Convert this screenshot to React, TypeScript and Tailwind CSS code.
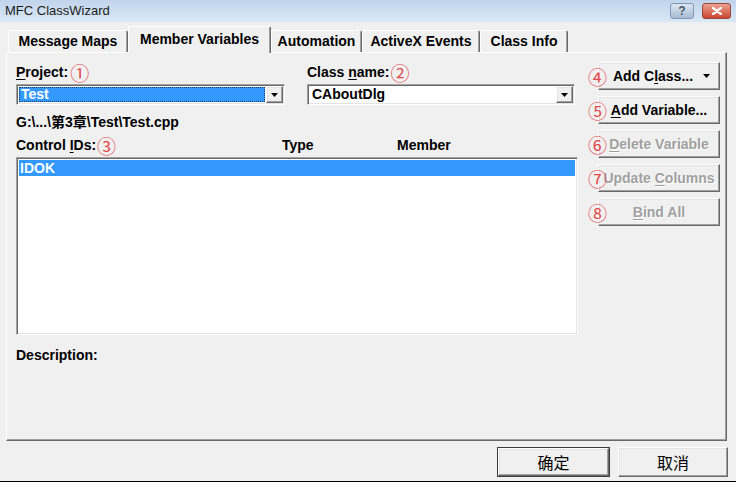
import React from 'react';

const raised =
  'bg-[#f0f0f0] border border-t-white border-l-white border-r-[#696969] border-b-[#696969] shadow-[inset_-1px_-1px_0_#a0a0a0,inset_1px_1px_0_#e3e3e3]';
const sunken =
  'border border-t-[#a0a0a0] border-l-[#a0a0a0] border-r-white border-b-white shadow-[inset_1px_1px_0_#696969,inset_-1px_-1px_0_#e3e3e3]';

function U({ children }: { children: React.ReactNode }) {
  return <span className="underline underline-offset-[2px] decoration-1">{children}</span>;
}

function Mark({ n, className = '' }: { n: string; className?: string }) {
  return (
    <span
      className={`font-['Noto_Sans_CJK_SC',sans-serif] font-normal text-[19px] leading-none text-[#e2474a] ${className}`}
    >
      {n}
    </span>
  );
}

function Arrow() {
  return (
    <svg width="7" height="4" viewBox="0 0 7 4">
      <path d="M0 0h7L3.5 4z" fill="#000" />
    </svg>
  );
}

function Combo({ value, selected, width }: { value: string; selected?: boolean; width: string }) {
  return (
    <div className={`${sunken} ${width} h-[21px] flex bg-white p-[1px]`}>
      <div className="flex-1 flex items-center p-[1px]">
        <div
          className={`h-full w-full flex items-center px-[2px] ${
            selected ? 'bg-[#3399ff] text-white outline-1 outline-dotted outline-[#1a3a6a] -outline-offset-1' : 'text-black'
          }`}
        >
          {value}
        </div>
      </div>
      <div className={`${raised} w-[17px] h-[17px] flex items-center justify-center`}>
        <Arrow />
      </div>
    </div>
  );
}

function SideButton({
  mark,
  children,
  disabled,
  dropdown,
}: {
  mark: string;
  children: React.ReactNode;
  disabled?: boolean;
  dropdown?: boolean;
}) {
  return (
    <div className="relative">
      <div
        className={`${raised} h-[28px] w-[122px] flex items-center justify-center ${
          disabled ? 'text-[#a0a0a0] [text-shadow:1px_1px_0_#ffffff]' : 'text-black'
        }`}
      >
        <span className={dropdown ? 'pl-[2px] mr-[14px]' : ''}>{children}</span>
        {dropdown && (
          <span className="absolute right-[10px] top-[12px]">
            <Arrow />
          </span>
        )}
      </div>
      <Mark n={mark} className="absolute -left-[10px] top-[5px]" />
    </div>
  );
}

const tabs = [
  { label: 'Message Maps', w: 'w-[120px]' },
  { label: 'Member Variables', w: 'w-[143px]', active: true },
  { label: 'Automation', w: 'w-[91px]' },
  { label: 'ActiveX Events', w: 'w-[118px]' },
  { label: 'Class Info', w: 'w-[88px]' },
];

export default function App() {
  return (
    <div className="w-[736px] h-[482px] bg-[#f0f0f0] border-b border-black flex flex-col font-['Liberation_Sans','Noto_Sans_CJK_SC',sans-serif] text-[14px] font-bold text-black select-none">
      {/* title bar */}
      <div className="h-[22px] flex items-center bg-gradient-to-b from-[#c0d4ec] to-[#dbe8f5] pl-[5px] pr-[5px]">
        <span className="flex-1 font-normal text-[13px] text-[#1b1b1b]">MFC ClassWizard</span>
        <div className="flex gap-[8px] items-center">
          <div className="w-[24px] h-[16px] rounded-[3px] border border-[#8298b6] bg-gradient-to-b from-[#dce6f2] to-[#a9bcd5] flex items-center justify-center text-[12px] leading-none font-bold text-[#3f4f66] [text-shadow:0_0_1px_#ffffff]">
            ?
          </div>
          <div className="w-[29px] h-[16px] rounded-[3px] border border-[#9b4638] bg-gradient-to-b from-[#eba293] to-[#c8432f] flex items-center justify-center">
            <svg width="10" height="8" viewBox="0 0 10 8">
              <path d="M1 1l8 6M9 1L1 7" stroke="#ffffff" strokeWidth="2.2" strokeLinecap="round" />
            </svg>
          </div>
        </div>
      </div>

      {/* tabs */}
      <div className="h-[30px] flex items-end pl-[8px]">
        {tabs.map((t) =>
          t.active ? (
            <div
              key={t.label}
              className={`${t.w} h-[27px] -mb-[1px] relative z-10 bg-[#f0f0f0] border-l border-t border-r border-l-white border-t-white border-r-[#696969] rounded-t-[2px] shadow-[inset_-1px_0_0_#a0a0a0] flex items-center justify-center pb-[2px]`}
            >
              {t.label}
            </div>
          ) : (
            <div
              key={t.label}
              className={`${t.w} h-[22px] border-l border-t border-r border-l-white border-t-white border-r-[#696969] rounded-t-[2px] shadow-[inset_-1px_0_0_#a0a0a0] flex items-center justify-center`}
            >
              {t.label}
            </div>
          )
        )}
      </div>

      {/* tab panel */}
      <div className="ml-[6px] w-[721px] h-[389px] border border-t-white border-l-white border-r-[#696969] border-b-[#696969] shadow-[inset_-1px_-1px_0_#a0a0a0] flex pl-[9px] pt-[9px] gap-[20px]">
        <div className="w-[562px] flex flex-col">
          <div className="flex">
            <div className="w-[291px] flex flex-col">
              <div className="h-[20px] flex items-center gap-[2px]">
                <span>
                  <U>P</U>roject:
                </span>
                <Mark n="①" />
              </div>
              <div className="mt-[2px]">
                <Combo value="Test" selected width="w-[269px]" />
              </div>
            </div>
            <div className="flex flex-col">
              <div className="h-[20px] flex items-center gap-[1px]">
                <span>
                  Class <U>n</U>ame:
                </span>
                <Mark n="②" />
              </div>
              <div className="mt-[2px]">
                <Combo value="CAboutDlg" width="w-[268px]" />
              </div>
            </div>
          </div>

          <div className="mt-[9px] h-[16px] leading-[16px]">G:\...\第3章\Test\Test.cpp</div>

          <div className="mt-[5px] h-[20px] flex items-center">
            <div className="w-[266px] flex items-center gap-[1px]">
              <span>
                Control <U>I</U>Ds:
              </span>
              <Mark n="③" />
            </div>
            <div className="w-[115px]">Type</div>
            <div>Member</div>
          </div>

          <div className={`${sunken} mt-[2px] h-[178px] bg-white p-[2px]`}>
            <div className="h-[16px] bg-[#3399ff] text-white flex items-center px-[1px]">IDOK</div>
          </div>

          <div className="mt-[12px] h-[16px] leading-[16px]">Description:</div>
        </div>

        <div className="flex flex-col gap-[6px]">
          <SideButton mark="④" dropdown>
            Add C<U>l</U>ass...
          </SideButton>
          <SideButton mark="⑤">
            <U>A</U>dd Variable...
          </SideButton>
          <SideButton mark="⑥" disabled>
            <U>D</U>elete Variable
          </SideButton>
          <SideButton mark="⑦" disabled>
            Update <U>C</U>olumns
          </SideButton>
          <SideButton mark="⑧" disabled>
            <U>B</U>ind All
          </SideButton>
        </div>
      </div>

      {/* dialog buttons */}
      <div className="mt-[6px] flex justify-end gap-[8px] pr-[8px] font-normal text-[16px] font-['Noto_Sans_CJK_SC',sans-serif]">
        <div className="w-[113px] h-[30px] border border-[#3c3c3c] flex">
          <div className={`${raised} flex-1 flex items-center justify-center`}>确定</div>
        </div>
        <div className={`${raised} w-[110px] h-[30px] flex items-center justify-center`}>取消</div>
      </div>
    </div>
  );
}
